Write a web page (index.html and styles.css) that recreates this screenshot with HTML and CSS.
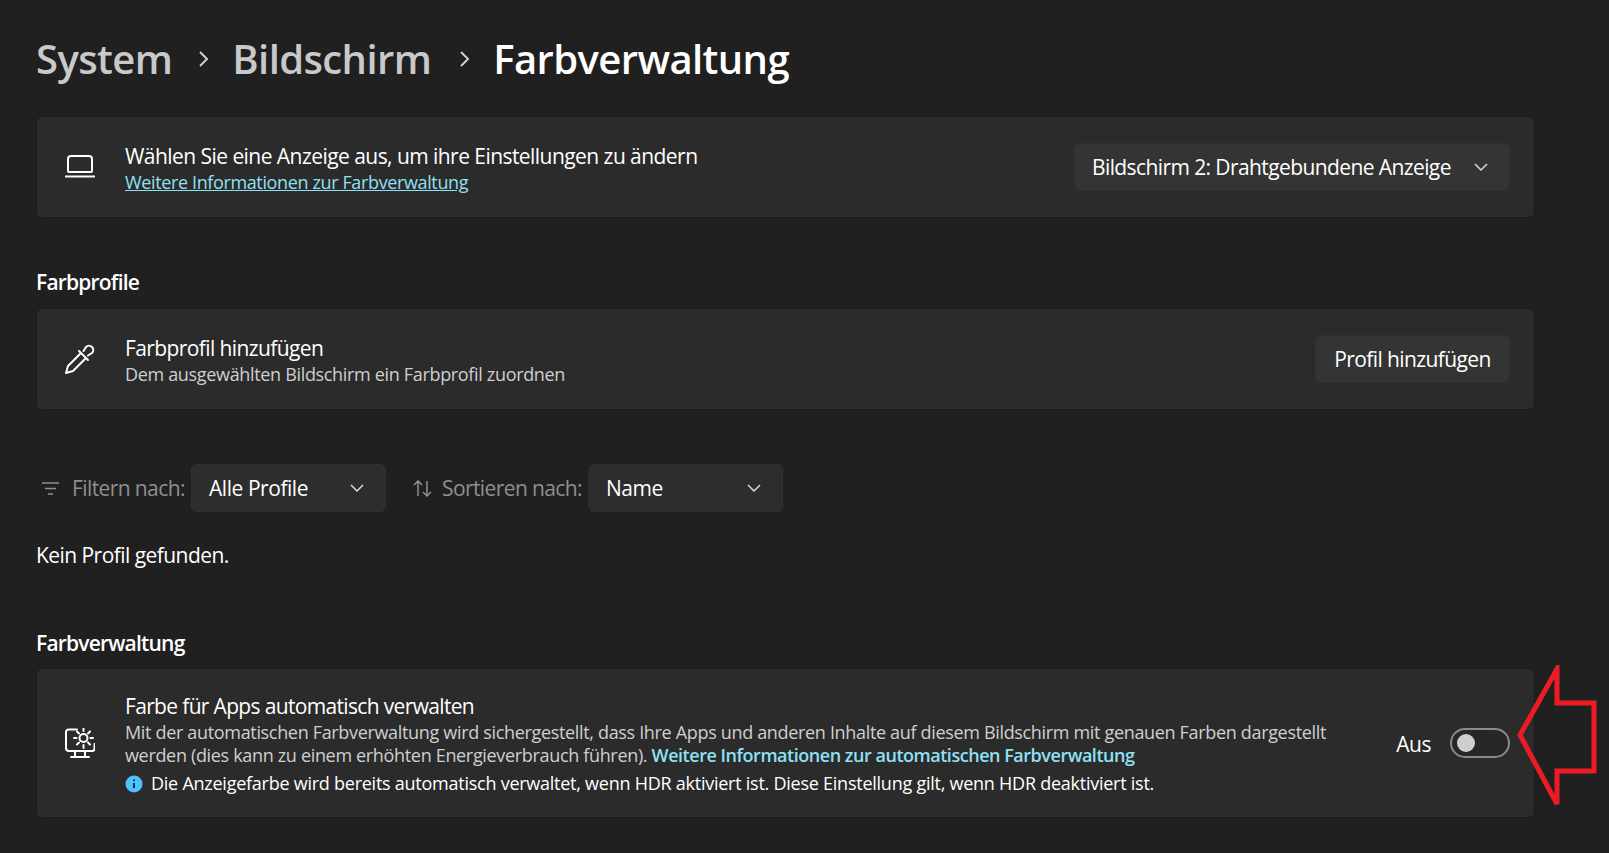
FILE: index.html
```html
<!DOCTYPE html>
<html lang="de">
<head>
    <title>Farbverwaltung</title>
    <link rel="stylesheet" href="styles.css">
</head>
<body>
    <div class="page">
        <div class="crumbs">
            <span class="crumb">System</span>
            <svg class="crumb-sep" width="14" height="18" viewBox="0 0 14 18"><path d="M3 2l7 7-7 7"/></svg>
            <span class="crumb crumb-two">Bildschirm</span>
            <svg class="crumb-sep" width="14" height="18" viewBox="0 0 14 18"><path d="M3 2l7 7-7 7"/></svg>
            <span class="crumb crumb-current">Farbverwaltung</span>
        </div>

        <div class="card">
            <div class="card-icon">
                <svg class="icon" width="30" height="24" viewBox="0 0 30 24"><path d="M6 1h18a3 3 0 0 1 3 3v12a1 1 0 0 1-1 1H4a1 1 0 0 1-1-1V4a3 3 0 0 1 3-3z"/><path d="M0 21.500h30"/></svg>
            </div>
            <div class="card-text">
                <div class="card-title card-title-wide">Wählen Sie eine Anzeige aus, um ihre Einstellungen zu ändern</div>
                <a class="link" href="#">Weitere Informationen zur Farbverwaltung</a>
            </div>
            <div class="combo combo-display">
                <span>Bildschirm 2: Drahtgebundene Anzeige</span>
                <svg class="chevron" width="14" height="8" viewBox="0 0 14 8"><path d="M1 1l6 6 6-6"/></svg>
            </div>
        </div>

        <h2 class="section-title section-profiles">Farbprofile</h2>
        <div class="card">
            <div class="card-icon">
                <svg class="icon" width="30" height="30" viewBox="0 0 30 30"><path d="M15 10L3 22l-2 7 7-2 12-12"/><path d="M14 7l9 9"/><path d="M18.500 7L21 3a4 4 0 0 1 6 6l-4 2.500"/></svg>
            </div>
            <div class="card-text">
                <div class="card-title">Farbprofil hinzufügen</div>
                <div class="card-sub">Dem ausgewählten Bildschirm ein Farbprofil zuordnen</div>
            </div>
            <div class="button">Profil hinzufügen</div>
        </div>

        <div class="filters">
            <svg class="filter-icon filter-funnel" width="17" height="13" viewBox="0 0 17 13"><path d="M0 1h17M3 6.500h11M6 12h5"/></svg>
            <span class="filter-label filter-label-name">Filtern nach:</span>
            <div class="combo combo-filter">
                <span>Alle Profile</span>
                <svg class="chevron" width="14" height="8" viewBox="0 0 14 8"><path d="M1 1l6 6 6-6"/></svg>
            </div>
            <svg class="filter-icon filter-sort" width="19" height="17" viewBox="0 0 19 17"><path d="M5 16V1M1 5l4-4 4 4M14 1v15M10 12l4 4 4-4"/></svg>
            <span class="filter-label filter-label-sort">Sortieren nach:</span>
            <div class="combo combo-filter">
                <span>Name</span>
                <svg class="chevron" width="14" height="8" viewBox="0 0 14 8"><path d="M1 1l6 6 6-6"/></svg>
            </div>
        </div>

        <div class="empty">Kein Profil gefunden.</div>

        <h2 class="section-title section-manage">Farbverwaltung</h2>
        <div class="card card-tall">
            <div class="card-icon">
                <svg class="icon" width="30" height="30" viewBox="0 0 30 30"><path d="M12 1.500H3.500a2.500 2.500 0 0 0-2.500 2.500v16a3 3 0 0 0 3 3h23a2.500 2.500 0 0 0 2.500-2.500V16"/><path d="M10 23v6M20 23v6M6 29h18"/><circle cx="18.500" cy="10" r="4"/><path d="M18.500 0v3M18.500 17v3M9 10h2.500M25.500 10H28M12 3.500l2 2M23 14.500l2 2M25 3.500l-2 2M14 14.500l-2 2"/></svg>
            </div>
            <div class="card-text">
                <div class="card-title card-title-tight">Farbe für Apps automatisch verwalten</div>
                <div class="card-sub card-desc">Mit der automatischen Farbverwaltung wird sichergestellt, dass Ihre Apps und anderen Inhalte auf diesem Bildschirm mit genauen Farben dargestellt werden (dies kann zu einem erhöhten Energieverbrauch führen). <a class="link-strong" href="#">Weitere Informationen zur automatischen Farbverwaltung</a></div>
                <div class="info">
                    <svg class="info-icon" width="18" height="18" viewBox="0 0 18 18"><circle cx="9" cy="9" r="8.500"/><path d="M9 8v5M9 4.500v1.500"/></svg>
                    <span>Die Anzeigefarbe wird bereits automatisch verwaltet, wenn HDR aktiviert ist. Diese Einstellung gilt, wenn HDR deaktiviert ist.</span>
                </div>
            </div>
            <div class="toggle-wrap">
                <span class="toggle-label">Aus</span>
                <div class="toggle"><div class="knob"></div></div>
            </div>
        </div>
    </div>

    <svg class="arrow" width="90" height="150" viewBox="0 0 90 150"><path d="M4 70L41 4v34h37v68H41v33z"/></svg>
</body>
</html>
```

FILE: styles.css
```css
* {
    box-sizing: border-box;
}
html, body {
    height: 100%;
}
body {
    margin: 0;
    background-color: #202020;
    color: #ffffff;
    font-family: "Open Sans", "Noto Sans", sans-serif;
    font-size: 21px;
    overflow: hidden;
    position: relative;
}
.page {
    padding: 31px 74px 0 36px;
}
.crumbs {
    display: flex;
    align-items: center;
    height: 56px;
    margin-bottom: 29px;
}
.crumb {
    font-size: 40px;
    font-weight: 600;
    line-height: 56px;
    letter-spacing: -0.6px;
    color: #c9c9c9;
    white-space: nowrap;
}
.crumb-two {
    margin-right: 2px;
}
.crumb-current {
    color: #ffffff;
}
.crumb-sep {
    margin: 0 21px 0 25px;
    fill: none;
    stroke: #d0d0d0;
    stroke-width: 2;
}
.card {
    display: flex;
    align-items: center;
    height: 102px;
    padding-right: 24px;
    background-color: #2b2b2b;
    border: 1px solid #1c1c1c;
    border-radius: 6px;
}
.card-tall {
    height: 150px;
}
.card-icon {
    display: flex;
    justify-content: center;
    flex: none;
    width: 88px;
    padding-right: 3px;
}
.icon {
    fill: none;
    stroke: #ffffff;
    stroke-width: 2;
    stroke-linecap: round;
    stroke-linejoin: round;
}
.card-text {
    flex: 1;
    min-width: 0;
    padding-top: 2px;
}
.card-title {
    font-size: 21px;
    line-height: 26px;
    letter-spacing: -0.6px;
}
.card-title-wide {
    letter-spacing: -0.55px;
}
.card-title-tight {
    letter-spacing: -0.66px;
}
.card-sub {
    margin-top: 2px;
    font-size: 18px;
    line-height: 23px;
    letter-spacing: -0.33px;
    color: #cfcfcf;
}
.card-desc {
    width: 1230px;
}
.link {
    display: block;
    width: fit-content;
    margin-top: 2px;
    font-size: 18px;
    line-height: 23px;
    letter-spacing: -0.37px;
    color: #8fe0f5;
}
.link-strong {
    font-weight: 600;
    letter-spacing: -0.47px;
    color: #8fe0f5;
    text-decoration: none;
}
.combo, .button {
    display: flex;
    align-items: center;
    flex: none;
    height: 48px;
    background-color: #343434;
    border: 1px solid #303030;
    border-radius: 6px;
    letter-spacing: -0.6px;
}
.combo {
    justify-content: space-between;
    padding: 0 21px 0 17px;
}
.combo-display {
    width: 436px;
}
.chevron {
    fill: none;
    stroke: #d8d8d8;
    stroke-width: 1.5;
}
.button {
    justify-content: center;
    width: 195px;
}
.section-title {
    margin: 0;
    font-size: 21px;
    font-weight: 600;
    line-height: 28px;
    letter-spacing: -0.8px;
}
.section-profiles {
    margin-top: 50px;
    margin-bottom: 12px;
}
.section-manage {
    margin-top: 60px;
    margin-bottom: 11px;
}
.filters {
    display: flex;
    align-items: center;
    margin-top: 54px;
}
.filter-icon {
    flex: none;
    fill: none;
    stroke: #909090;
    stroke-width: 1.5;
}
.filter-funnel {
    margin: 0 13px 0 6px;
}
.filter-sort {
    margin: 0 10px 0 27px;
}
.filter-label {
    color: #8f8f8f;
    letter-spacing: -0.6px;
    white-space: nowrap;
}
.filter-label-name {
    width: 119px;
}
.filter-label-sort {
    width: 146px;
}
.combo-filter {
    width: 195px;
    background-color: #2d2d2d;
    letter-spacing: -0.45px;
}
.empty {
    margin-top: 29px;
    line-height: 28px;
    letter-spacing: -0.55px;
}
.info {
    display: flex;
    align-items: center;
    gap: 8px;
    margin-top: 5px;
    font-size: 18px;
    line-height: 23px;
    letter-spacing: -0.25px;
}
.info-icon {
    flex: none;
}
.info-icon circle {
    fill: #4cc2ff;
}
.info-icon path {
    stroke: #202020;
    stroke-width: 1.8;
}
.toggle-wrap {
    display: flex;
    align-items: center;
    gap: 19px;
    flex: none;
}
.toggle-label {
    padding-top: 2px;
    letter-spacing: -0.5px;
}
.toggle {
    display: flex;
    align-items: center;
    width: 60px;
    height: 30px;
    padding-left: 5px;
    border: 2px solid #8b8b8b;
    border-radius: 15px;
    background-color: #272727;
}
.knob {
    width: 18px;
    height: 18px;
    border-radius: 50%;
    background-color: #cfcfcf;
}
.arrow {
    position: absolute;
    left: 1516px;
    top: 665px;
    fill: none;
    stroke: #ed1c24;
    stroke-width: 5;
    stroke-linejoin: miter;
}
```
